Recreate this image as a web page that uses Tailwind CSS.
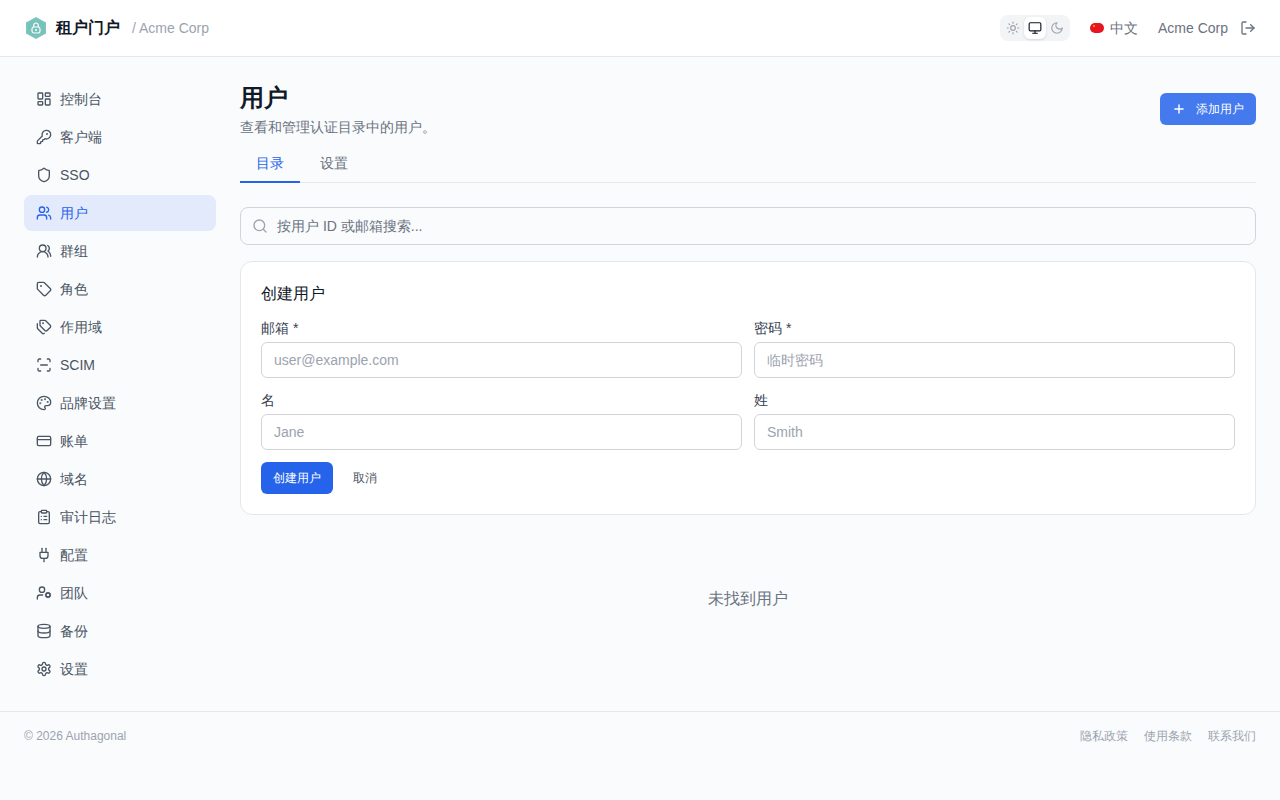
<!DOCTYPE html>
<html lang="zh">

<head>
    <meta charset="UTF-8">
    <meta name="viewport" content="width=device-width, initial-scale=1.0">
    <title>租户门户</title>
    <script src="https://cdn.jsdelivr.net/npm/@tailwindcss/browser@4"></script>
</head>

<body class="bg-[#f9fbfd] text-[#111827] font-['Liberation_Sans',sans-serif] h-[800px] overflow-hidden">

    <header class="h-[57px] bg-white border-b border-[#e5e7eb] px-6 flex items-center justify-between">
        <div class="flex items-center">
            <svg class="w-6 h-6" viewBox="0 0 24 24">
                <path d="M12 1 22 6.500v11L12 23 2 17.500v-11Z" fill="#7ac5bd" />
                <path d="M12 3.500 19.800 8v8L12 20.500 4.200 16V8Z" fill="#74c0b8" />
                <rect x="8" y="11" width="8" height="6" rx="2" fill="none" stroke="#fff" stroke-width="1.200" />
                <path d="M9.700 11V9.300a2.300 2.300 0 0 1 4.600 0V11" fill="none" stroke="#fff" stroke-width="1.200" />
                <circle cx="12" cy="14" r="1" fill="#fff" />
                <g fill="#fff" opacity=".6">
                    <circle cx="6.500" cy="9.500" r=".4" /><circle cx="17.500" cy="9.500" r=".4" /><circle cx="6" cy="14.500" r=".4" /><circle cx="18" cy="14.500" r=".4" /><circle cx="12" cy="5" r=".4" /><circle cx="12" cy="19.500" r=".4" />
                </g>
            </svg>
            <span class="ml-2 text-base font-bold text-[#111827]">租户门户</span>
            <span class="ml-3 text-sm text-[#9ca3af]">/ Acme Corp</span>
        </div>
        <div class="flex items-center">
            <div class="flex items-center h-[26px] p-0.5 bg-[#f3f4f6] rounded-lg">
                <span class="w-[22px] h-[22px] flex items-center justify-center text-[#9ca3af]">
                    <svg class="w-3.5 h-3.5" viewBox="0 0 24 24" fill="none" stroke="currentColor" stroke-width="2" stroke-linecap="round" stroke-linejoin="round"><circle cx="12" cy="12" r="4" /><path d="M12 2v2" /><path d="M12 20v2" /><path d="m4.930 4.930 1.410 1.410" /><path d="m17.660 17.660 1.410 1.410" /><path d="M2 12h2" /><path d="M20 12h2" /><path d="m6.340 17.660-1.410 1.410" /><path d="m19.070 4.930-1.410 1.410" /></svg>
                </span>
                <span class="w-[22px] h-[22px] flex items-center justify-center text-[#111827] bg-white rounded-md shadow-sm">
                    <svg class="w-3.5 h-3.5" viewBox="0 0 24 24" fill="none" stroke="currentColor" stroke-width="2" stroke-linecap="round" stroke-linejoin="round"><rect width="20" height="14" x="2" y="3" rx="2" /><line x1="8" x2="16" y1="21" y2="21" /><line x1="12" x2="12" y1="17" y2="21" /></svg>
                </span>
                <span class="w-[22px] h-[22px] flex items-center justify-center text-[#9ca3af]">
                    <svg class="w-3.5 h-3.5" viewBox="0 0 24 24" fill="none" stroke="currentColor" stroke-width="2" stroke-linecap="round" stroke-linejoin="round"><path d="M12 3a6 6 0 0 0 9 9 9 9 0 1 1-9-9Z" /></svg>
                </span>
            </div>
            <div class="ml-5 flex items-center gap-1.5 text-sm text-[#6b7280]">
                <span class="w-3.5 h-2.5 rounded-[5px] bg-[#e8141f] relative overflow-hidden">
                    <span class="absolute left-[3px] top-[2px] w-[2px] h-[2px] rounded-full bg-[#f5b800]"></span>
                </span>
                <span>中文</span>
            </div>
            <span class="ml-5 text-sm text-[#6b7280]">Acme Corp</span>
            <svg class="ml-3 w-4 h-4 text-[#6b7280]" viewBox="0 0 24 24" fill="none" stroke="currentColor" stroke-width="2" stroke-linecap="round" stroke-linejoin="round"><path d="M9 21H5a2 2 0 0 1-2-2V5a2 2 0 0 1 2-2h4" /><path d="m16 17 5-5-5-5" /><path d="M21 12H9" /></svg>
        </div>
    </header>

    <div class="flex h-[654px] px-6 gap-6 pt-6">
        <nav class="w-48 shrink-0 flex flex-col gap-0.5 text-sm text-[#4b5563]">
            <a class="h-9 px-3 rounded-lg flex items-center gap-2">
                <svg class="w-4 h-4" viewBox="0 0 24 24" fill="none" stroke="currentColor" stroke-width="2" stroke-linecap="round" stroke-linejoin="round"><rect width="7" height="9" x="3" y="3" rx="1" /><rect width="7" height="5" x="14" y="3" rx="1" /><rect width="7" height="9" x="14" y="12" rx="1" /><rect width="7" height="5" x="3" y="16" rx="1" /></svg>
                控制台
            </a>
            <a class="h-9 px-3 rounded-lg flex items-center gap-2">
                <svg class="w-4 h-4" viewBox="0 0 24 24" fill="none" stroke="currentColor" stroke-width="2" stroke-linecap="round" stroke-linejoin="round"><path d="M2.586 17.414A2 2 0 0 0 2 18.828V21a1 1 0 0 0 1 1h3a1 1 0 0 0 1-1v-1a1 1 0 0 1 1-1h1a1 1 0 0 0 1-1v-1a1 1 0 0 1 1-1h.172a2 2 0 0 0 1.414-.586l.814-.814a6.500 6.500 0 1 0-4-4z" /><circle cx="16.500" cy="7.500" r=".5" fill="currentColor" /></svg>
                客户端
            </a>
            <a class="h-9 px-3 rounded-lg flex items-center gap-2">
                <svg class="w-4 h-4" viewBox="0 0 24 24" fill="none" stroke="currentColor" stroke-width="2" stroke-linecap="round" stroke-linejoin="round"><path d="M20 13c0 5-3.500 7.500-7.660 8.950a1 1 0 0 1-.67-.01C7.500 20.500 4 18 4 13V6a1 1 0 0 1 1-1c2 0 4.500-1.200 6.240-2.720a1.170 1.170 0 0 1 1.520 0C14.510 3.810 17 5 19 5a1 1 0 0 1 1 1z" /></svg>
                SSO
            </a>
            <a class="h-9 px-3 rounded-lg flex items-center gap-2 bg-[#e3eafb] text-[#2563eb]">
                <svg class="w-4 h-4" viewBox="0 0 24 24" fill="none" stroke="currentColor" stroke-width="2" stroke-linecap="round" stroke-linejoin="round"><path d="M16 21v-2a4 4 0 0 0-4-4H6a4 4 0 0 0-4 4v2" /><circle cx="9" cy="7" r="4" /><path d="M22 21v-2a4 4 0 0 0-3-3.870" /><path d="M16 3.130a4 4 0 0 1 0 7.750" /></svg>
                用户
            </a>
            <a class="h-9 px-3 rounded-lg flex items-center gap-2">
                <svg class="w-4 h-4" viewBox="0 0 24 24" fill="none" stroke="currentColor" stroke-width="2" stroke-linecap="round" stroke-linejoin="round"><path d="M18 21a8 8 0 0 0-16 0" /><circle cx="10" cy="8" r="5" /><path d="M22 20c0-3.370-2-6.500-4-8a5 5 0 0 0-.45-8.300" /></svg>
                群组
            </a>
            <a class="h-9 px-3 rounded-lg flex items-center gap-2">
                <svg class="w-4 h-4" viewBox="0 0 24 24" fill="none" stroke="currentColor" stroke-width="2" stroke-linecap="round" stroke-linejoin="round"><path d="M12.586 2.586A2 2 0 0 0 11.172 2H4a2 2 0 0 0-2 2v7.172a2 2 0 0 0 .586 1.414l8.704 8.704a2.426 2.426 0 0 0 3.420 0l6.580-6.580a2.426 2.426 0 0 0 0-3.420z" /><circle cx="7.500" cy="7.500" r=".5" fill="currentColor" /></svg>
                角色
            </a>
            <a class="h-9 px-3 rounded-lg flex items-center gap-2">
                <svg class="w-4 h-4" viewBox="0 0 24 24" fill="none" stroke="currentColor" stroke-width="2" stroke-linecap="round" stroke-linejoin="round"><path d="M13.172 2a2 2 0 0 1 1.414.586l6.710 6.710a2.400 2.400 0 0 1 0 3.408l-4.592 4.592a2.400 2.400 0 0 1-3.408 0l-6.710-6.710A2 2 0 0 1 6 9.172V3a1 1 0 0 1 1-1z" /><path d="M2 7v6.172a2 2 0 0 0 .586 1.414l6.710 6.710a2.400 2.400 0 0 0 3.191.193" /><circle cx="10.500" cy="6.500" r=".5" fill="currentColor" /></svg>
                作用域
            </a>
            <a class="h-9 px-3 rounded-lg flex items-center gap-2">
                <svg class="w-4 h-4" viewBox="0 0 24 24" fill="none" stroke="currentColor" stroke-width="2" stroke-linecap="round" stroke-linejoin="round"><path d="M3 7V5a2 2 0 0 1 2-2h2" /><path d="M17 3h2a2 2 0 0 1 2 2v2" /><path d="M21 17v2a2 2 0 0 1-2 2h-2" /><path d="M7 21H5a2 2 0 0 1-2-2v-2" /><path d="M7 12h10" /></svg>
                SCIM
            </a>
            <a class="h-9 px-3 rounded-lg flex items-center gap-2">
                <svg class="w-4 h-4" viewBox="0 0 24 24" fill="none" stroke="currentColor" stroke-width="2" stroke-linecap="round" stroke-linejoin="round"><path d="M12 22a1 1 0 0 1 0-20 10 9 0 0 1 10 9 5 5 0 0 1-5 5h-2.250a1.750 1.750 0 0 0-1.400 2.800l.3.4a1.750 1.750 0 0 1-1.400 2.800z" /><circle cx="13.500" cy="6.500" r=".5" fill="currentColor" /><circle cx="17.500" cy="10.500" r=".5" fill="currentColor" /><circle cx="6.500" cy="12.500" r=".5" fill="currentColor" /><circle cx="8.500" cy="7.500" r=".5" fill="currentColor" /></svg>
                品牌设置
            </a>
            <a class="h-9 px-3 rounded-lg flex items-center gap-2">
                <svg class="w-4 h-4" viewBox="0 0 24 24" fill="none" stroke="currentColor" stroke-width="2" stroke-linecap="round" stroke-linejoin="round"><rect width="20" height="14" x="2" y="5" rx="2" /><line x1="2" x2="22" y1="10" y2="10" /></svg>
                账单
            </a>
            <a class="h-9 px-3 rounded-lg flex items-center gap-2">
                <svg class="w-4 h-4" viewBox="0 0 24 24" fill="none" stroke="currentColor" stroke-width="2" stroke-linecap="round" stroke-linejoin="round"><circle cx="12" cy="12" r="10" /><path d="M12 2a14.500 14.500 0 0 0 0 20 14.500 14.500 0 0 0 0-20" /><path d="M2 12h20" /></svg>
                域名
            </a>
            <a class="h-9 px-3 rounded-lg flex items-center gap-2">
                <svg class="w-4 h-4" viewBox="0 0 24 24" fill="none" stroke="currentColor" stroke-width="2" stroke-linecap="round" stroke-linejoin="round"><rect width="8" height="4" x="8" y="2" rx="1" /><path d="M16 4h2a2 2 0 0 1 2 2v14a2 2 0 0 1-2 2H6a2 2 0 0 1-2-2V6a2 2 0 0 1 2-2h2" /><path d="M12 11h4" /><path d="M12 16h4" /><path d="M8 11h.01" /><path d="M8 16h.01" /></svg>
                审计日志
            </a>
            <a class="h-9 px-3 rounded-lg flex items-center gap-2">
                <svg class="w-4 h-4" viewBox="0 0 24 24" fill="none" stroke="currentColor" stroke-width="2" stroke-linecap="round" stroke-linejoin="round"><path d="M12 22v-5" /><path d="M9 8V2" /><path d="M15 8V2" /><path d="M18 8v5a4 4 0 0 1-4 4h-4a4 4 0 0 1-4-4V8Z" /></svg>
                配置
            </a>
            <a class="h-9 px-3 rounded-lg flex items-center gap-2">
                <svg class="w-4 h-4" viewBox="0 0 24 24" fill="none" stroke="currentColor" stroke-width="2" stroke-linecap="round" stroke-linejoin="round"><circle cx="18" cy="15" r="3" /><circle cx="9" cy="7" r="4" /><path d="M10 15H6a4 4 0 0 0-4 4v2" /><path d="m21.700 16.400-.9-.3" /><path d="m15.200 13.900-.9-.3" /><path d="m16.600 18.700.3-.9" /><path d="m19.100 12.200.3-.9" /><path d="m19.600 18.700-.4-1" /><path d="m16.800 12.300-.4-1" /><path d="m14.300 16.600 1-.4" /><path d="m20.700 13.800 1-.4" /></svg>
                团队
            </a>
            <a class="h-9 px-3 rounded-lg flex items-center gap-2">
                <svg class="w-4 h-4" viewBox="0 0 24 24" fill="none" stroke="currentColor" stroke-width="2" stroke-linecap="round" stroke-linejoin="round"><ellipse cx="12" cy="5" rx="9" ry="3" /><path d="M3 5V19A9 3 0 0 0 21 19V5" /><path d="M3 12A9 3 0 0 0 21 12" /></svg>
                备份
            </a>
            <a class="h-9 px-3 rounded-lg flex items-center gap-2">
                <svg class="w-4 h-4" viewBox="0 0 24 24" fill="none" stroke="currentColor" stroke-width="2" stroke-linecap="round" stroke-linejoin="round"><path d="M12.220 2h-.44a2 2 0 0 0-2 2v.18a2 2 0 0 1-1 1.730l-.43.25a2 2 0 0 1-2 0l-.15-.08a2 2 0 0 0-2.730.73l-.22.38a2 2 0 0 0 .73 2.730l.15.1a2 2 0 0 1 1 1.720v.51a2 2 0 0 1-1 1.740l-.15.09a2 2 0 0 0-.73 2.730l.22.38a2 2 0 0 0 2.730.73l.15-.08a2 2 0 0 1 2 0l.43.25a2 2 0 0 1 1 1.730V20a2 2 0 0 0 2 2h.44a2 2 0 0 0 2-2v-.18a2 2 0 0 1 1-1.730l.43-.25a2 2 0 0 1 2 0l.15.08a2 2 0 0 0 2.730-.73l.22-.39a2 2 0 0 0-.73-2.730l-.15-.08a2 2 0 0 1-1-1.740v-.5a2 2 0 0 1 1-1.740l.15-.09a2 2 0 0 0 .73-2.730l-.22-.38a2 2 0 0 0-2.730-.73l-.15.08a2 2 0 0 1-2 0l-.43-.25a2 2 0 0 1-1-1.730V4a2 2 0 0 0-2-2z" /><circle cx="12" cy="12" r="3" /></svg>
                设置
            </a>
        </nav>

        <main class="flex-1 min-w-0">
            <div class="flex items-center justify-between">
                <div>
                    <h1 class="text-2xl font-bold leading-[34px] text-[#111827]">用户</h1>
                    <p class="mt-0.5 text-sm leading-5 text-[#6b7280]">查看和管理认证目录中的用户。</p>
                </div>
                <button class="h-8 px-3 flex items-center gap-2.5 rounded-md bg-[#2563eb]/85 text-white text-xs">
                    <svg class="w-3.5 h-3.5" viewBox="0 0 24 24" fill="none" stroke="currentColor" stroke-width="2.500" stroke-linecap="round" stroke-linejoin="round"><path d="M5 12h14" /><path d="M12 5v14" /></svg>
                    添加用户
                </button>
            </div>

            <div class="mt-2 flex gap-1 border-b border-[#e5e7eb] text-sm">
                <span class="w-[60px] h-[38px] flex items-center justify-center -mb-px border-b-2 border-[#2563eb] text-[#2563eb]">目录</span>
                <span class="w-[60px] h-[38px] flex items-center justify-center -mb-px border-b-2 border-transparent text-[#6b7280]">设置</span>
            </div>

            <div class="mt-6 h-[38px] px-[11px] flex items-center gap-[9px] border border-[#d1d5db] rounded-lg text-sm text-[#6b7280]">
                <svg class="w-4 h-4 text-[#9ca3af]" viewBox="0 0 24 24" fill="none" stroke="currentColor" stroke-width="2" stroke-linecap="round" stroke-linejoin="round"><circle cx="11" cy="11" r="8" /><path d="m21 21-4.300-4.300" /></svg>
                按用户 ID 或邮箱搜索...
            </div>

            <section class="mt-4 bg-white border border-[#e5e7eb] rounded-xl p-5">
                <h2 class="text-base leading-6 text-[#111827]">创建用户</h2>
                <div class="mt-3 grid grid-cols-2 gap-x-3 gap-y-3 text-sm">
                    <div>
                        <label class="block leading-5 text-[#374151]">邮箱 *</label>
                        <input class="mt-1 block w-full h-9 px-3 border border-[#d1d5db] rounded-md placeholder:text-[#9ca3af]" placeholder="user@example.com">
                    </div>
                    <div>
                        <label class="block leading-5 text-[#374151]">密码 *</label>
                        <input class="mt-1 block w-full h-9 px-3 border border-[#d1d5db] rounded-md placeholder:text-[#9ca3af]" placeholder="临时密码">
                    </div>
                    <div>
                        <label class="block leading-5 text-[#374151]">名</label>
                        <input class="mt-1 block w-full h-9 px-3 border border-[#d1d5db] rounded-md placeholder:text-[#9ca3af]" placeholder="Jane">
                    </div>
                    <div>
                        <label class="block leading-5 text-[#374151]">姓</label>
                        <input class="mt-1 block w-full h-9 px-3 border border-[#d1d5db] rounded-md placeholder:text-[#9ca3af]" placeholder="Smith">
                    </div>
                </div>
                <div class="mt-3 flex items-center text-xs">
                    <button class="h-8 px-3 rounded-md bg-[#2563eb] text-white">创建用户</button>
                    <button class="h-8 px-3 ml-2 text-[#4b5563]">取消</button>
                </div>
            </section>

            <p class="mt-[72px] text-center text-base leading-6 text-[#6b7280]">未找到用户</p>
        </main>
    </div>

    <footer class="border-t border-[#e5e7eb] px-6 pt-4 flex items-center justify-between text-xs leading-4 text-[#9ca3af]">
        <span>© 2026 Authagonal</span>
        <div class="flex gap-4">
            <a>隐私政策</a>
            <a>使用条款</a>
            <a>联系我们</a>
        </div>
    </footer>

</body>

</html>
